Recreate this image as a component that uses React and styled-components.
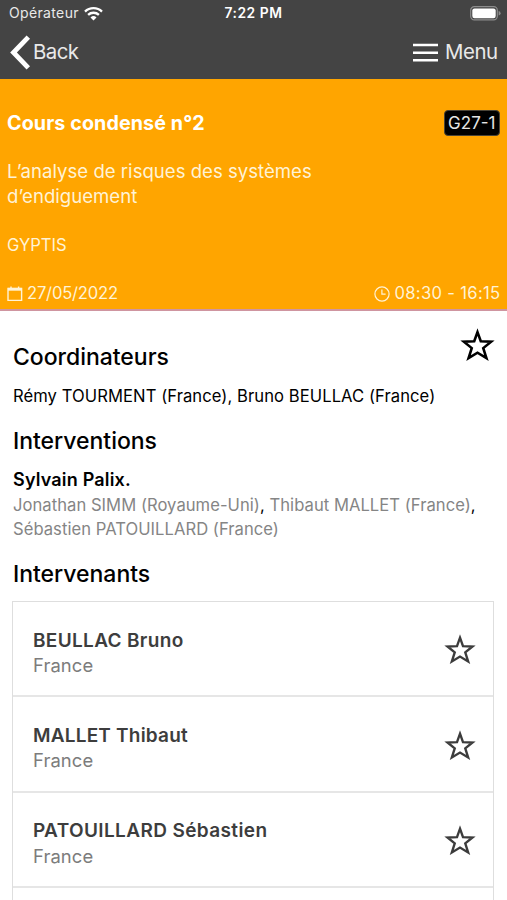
import styled, { createGlobalStyle } from 'styled-components';

const people = [
    { name: 'BEULLAC Bruno', country: 'France', ls: 0.33 },
    { name: 'MALLET Thibaut', country: 'France', ls: 0.2 },
    { name: 'PATOUILLARD Sébastien', country: 'France', ls: 0.38 },
];

function StarIcon({ size, color }) {
    return (
        <svg width={size} height={size * 29 / 31} viewBox="1 0.4 31 29" fill="none" stroke={color} strokeWidth="2.3" strokeMiterlimit="10">
            <path d="M16.5 4 L19.4 12.1 L28.6 12.5 L21.6 18.2 L24.4 27 L16.5 22.3 L8.6 27 L11.4 18.2 L4.4 12.5 L13.6 12.1 Z" />
        </svg>
    );
}

function WifiIcon() {
    return (
        <svg width="19" height="15" viewBox="0 0 19 15" fill="none" stroke="#fff" strokeWidth="2.3">
            <path d="M1 5.6 A12.2 12.2 0 0 1 18 5.6" />
            <path d="M4.1 8.9 A7.8 7.8 0 0 1 14.9 8.9" />
            <path d="M9.5 14.5 L6.5 11.4 A4.3 4.3 0 0 1 12.5 11.4 Z" fill="#fff" stroke="none" />
        </svg>
    );
}

function BatteryIcon() {
    return (
        <svg width="31" height="15" viewBox="0 0 31 15">
            <rect x="0.7" y="0.7" width="26.6" height="13.2" rx="3.6" fill="none" stroke="#8c8c8c" strokeWidth="1.2" />
            <rect x="2.3" y="2.4" width="23.4" height="9.8" rx="2.2" fill="#fff" />
            <path d="M28.6 5 Q30.6 5.6 30.6 7.3 Q30.6 9 28.6 9.6 Z" fill="#8c8c8c" />
        </svg>
    );
}

function CalendarIcon() {
    return (
        <svg width="16" height="16" viewBox="0 0 16 16" fill="none" stroke="#fff3d6">
            <path d="M1 2.5 H14.6 V14.4 H1 Z" strokeWidth="1.4" />
            <path d="M1 3.3 H14.6" strokeWidth="2.8" />
            <path d="M4 0.4 V3 M11.6 0.4 V3" strokeWidth="1.4" />
        </svg>
    );
}

function ClockIcon() {
    return (
        <svg width="16" height="16" viewBox="0 0 16 16" fill="none" stroke="#fff3d6" strokeWidth="1.2">
            <circle cx="8" cy="8" r="7.1" />
            <path d="M7.9 3.6 V8.2 H11.6" />
        </svg>
    );
}

export default function App() {
    return (
        <Page>
            <Global />
            <TopBar>
                <StatusBar>
                    <Carrier>
                        <Text $ls={0.35}>Opérateur</Text>
                        <WifiIcon />
                    </Carrier>
                    <Time>7:22 PM</Time>
                    <Battery><BatteryIcon /></Battery>
                </StatusBar>
                <NavBar>
                    <NavButton $gap={2}>
                        <svg width="21" height="36" viewBox="0 0 21 36" fill="none" stroke="#fff" strokeWidth="4.8">
                            <path d="M18.3 2.2 L3.5 17.5 L18.3 32.8" />
                        </svg>
                        <Text $ls={-0.55}>Back</Text>
                    </NavButton>
                    <NavButton $gap={7}>
                        <svg width="25" height="20" viewBox="0 0 25 20" stroke="#fff" strokeWidth="2.5">
                            <path d="M0 2 H25 M0 9.7 H25 M0 17.3 H25" />
                        </svg>
                        <Text $ls={-0.5}>Menu</Text>
                    </NavButton>
                </NavBar>
            </TopBar>

            {/* bandeau de la session */}
            <Banner>
                <BannerRow>
                    <SessionTitle>Cours condensé n°2</SessionTitle>
                    <Room>G27-1</Room>
                </BannerRow>
                <Subject>L’analyse de risques des systèmes<br />d’endiguement</Subject>
                <Place>GYPTIS</Place>
                <BannerRow>
                    <Slot $gap={4}><CalendarIcon /><Text $ls={-0.2}>27/05/2022</Text></Slot>
                    <Slot $gap={4}><ClockIcon /><Text $ls={0.32}>08:30 - 16:15</Text></Slot>
                </BannerRow>
            </Banner>

            <Content>
                <TitleRow>
                    <Heading>Coordinateurs</Heading>
                    <Favorite><StarIcon size={35} color="#000" /></Favorite>
                </TitleRow>
                <Names $ls={0.07}>Rémy TOURMENT (France), Bruno BEULLAC (France)</Names>

                <Heading $top={6}>Interventions</Heading>
                <Speaker>Sylvain Palix.</Speaker>
                <Names $ls={0.04}>
                    <Muted>Jonathan SIMM (Royaume-Uni)</Muted>, <Muted>Thibaut MALLET (France)</Muted>,<br />
                    <Muted>Sébastien PATOUILLARD (France)</Muted>
                </Names>

                <Heading $top={5.5}>Intervenants</Heading>
                <List>
                    {people.map((p) => (
                        <Card key={p.name}>
                            <CardText>
                                <CardName $ls={p.ls}>{p.name}</CardName>
                                <Country>{p.country}</Country>
                            </CardText>
                            <StarIcon size={32} color="#3c3c3c" />
                        </Card>
                    ))}
                </List>
            </Content>
        </Page>
    );
}

const Global = createGlobalStyle`
    * {
        box-sizing: border-box;
    }
    body {
        margin: 0;
        background: #fff;
    }
    svg {
        display: block;
        flex: none;
    }
`

const Page = styled.div`
    height: 900px;
    overflow: hidden;
    background: #fff;
    color: #000;
    font-family: Inter, "Liberation Sans", sans-serif;
    font-size: 16.6px;
    line-height: 24.4px;
    white-space: nowrap;
`

const Text = styled.span`
    letter-spacing: ${(p) => p.$ls || 0}px;
`

const TopBar = styled.header`
    height: 79px;
    background: #444;
    color: #e9e9e9;
`

const StatusBar = styled.div`
    display: grid;
    grid-template-columns: 1fr auto 1fr;
    align-items: center;
    height: 27px;
    padding: 0 6px 0 9px;
    font-size: 14px;
`

const Carrier = styled.div`
    display: flex;
    align-items: center;
    gap: 5px;
`

const Time = styled.div`
    margin-left: -3px;
    font-size: 13.8px;
    font-weight: 600;
    letter-spacing: 0.55px;
    color: #fff;
`

const Battery = styled.div`
    display: flex;
    justify-content: flex-end;
`

const NavBar = styled.div`
    display: flex;
    justify-content: space-between;
    align-items: center;
    height: 51px;
    padding: 0 9.5px 0 10px;
`

const NavButton = styled.div`
    display: flex;
    align-items: center;
    gap: ${(p) => p.$gap}px;
    font-size: 20.4px;
`

const Banner = styled.section`
    height: 232px;
    padding: 31.6px 6.5px 0 7px;
    background: #ffa500;
    border-bottom: 2px solid #cf95a0;
    color: #fff3d6;
`

const BannerRow = styled.div`
    display: flex;
    justify-content: space-between;
    align-items: center;
    height: 24.4px;
`

const SessionTitle = styled.h1`
    margin: 0;
    font-size: 19.7px;
    font-weight: 700;
    letter-spacing: 0.1px;
    color: #fff;
`

const Room = styled.span`
    height: 26px;
    margin-right: 0.5px;
    padding: 0 3.5px;
    line-height: 25px;
    border: 1px solid #4a4437;
    border-radius: 4px;
    background: #000;
    color: #e6e6e6;
    font-size: 17px;
`

const Subject = styled.p`
    margin: 24.4px 0;
    font-size: 18.6px;
`

const Place = styled.p`
    margin: 0 0 24.4px;
`

const Slot = styled.span`
    display: flex;
    align-items: center;
    gap: ${(p) => p.$gap}px;
`

const Content = styled.main`
    padding: 19px 13px 0;
`

const TitleRow = styled.div`
    display: flex;
    justify-content: space-between;
    align-items: flex-start;
`

const Heading = styled.h2`
    margin: ${(p) => p.$top || 0}px 0 0;
    height: 54px;
    line-height: 54px;
    font-size: 23px;
    font-weight: 500;
    letter-spacing: -0.03px;
`

const Favorite = styled.div`
    margin: -2px -1px 0 0;
`

const Names = styled.p`
    margin: 0;
    letter-spacing: ${(p) => p.$ls}px;
`

const Muted = styled.span`
    color: #858585;
`

const Speaker = styled.p`
    margin: 0;
    font-size: 18px;
    font-weight: 600;
    letter-spacing: 0.18px;
`

/* la liste continue sous le bord de l'écran */
const List = styled.div`
    height: 340px;
    margin: 0 0 0 -1px;
    border: 1px solid #dedede;
    border-bottom: 0;
`

const Card = styled.article`
    display: flex;
    justify-content: space-between;
    align-items: center;
    height: 95.3px;
    padding: 1px 17.5px 0 20px;
    border-bottom: 2px solid #e6e6e6;
`

const CardText = styled.div`
    padding-top: 7.6px;
`

const CardName = styled.div`
    font-size: 19px;
    font-weight: 600;
    color: #3d3d3d;
    letter-spacing: ${(p) => p.$ls}px;
`

const Country = styled.div`
    font-size: 18.4px;
    color: #7c7c7c;
    letter-spacing: 0.1px;
`
